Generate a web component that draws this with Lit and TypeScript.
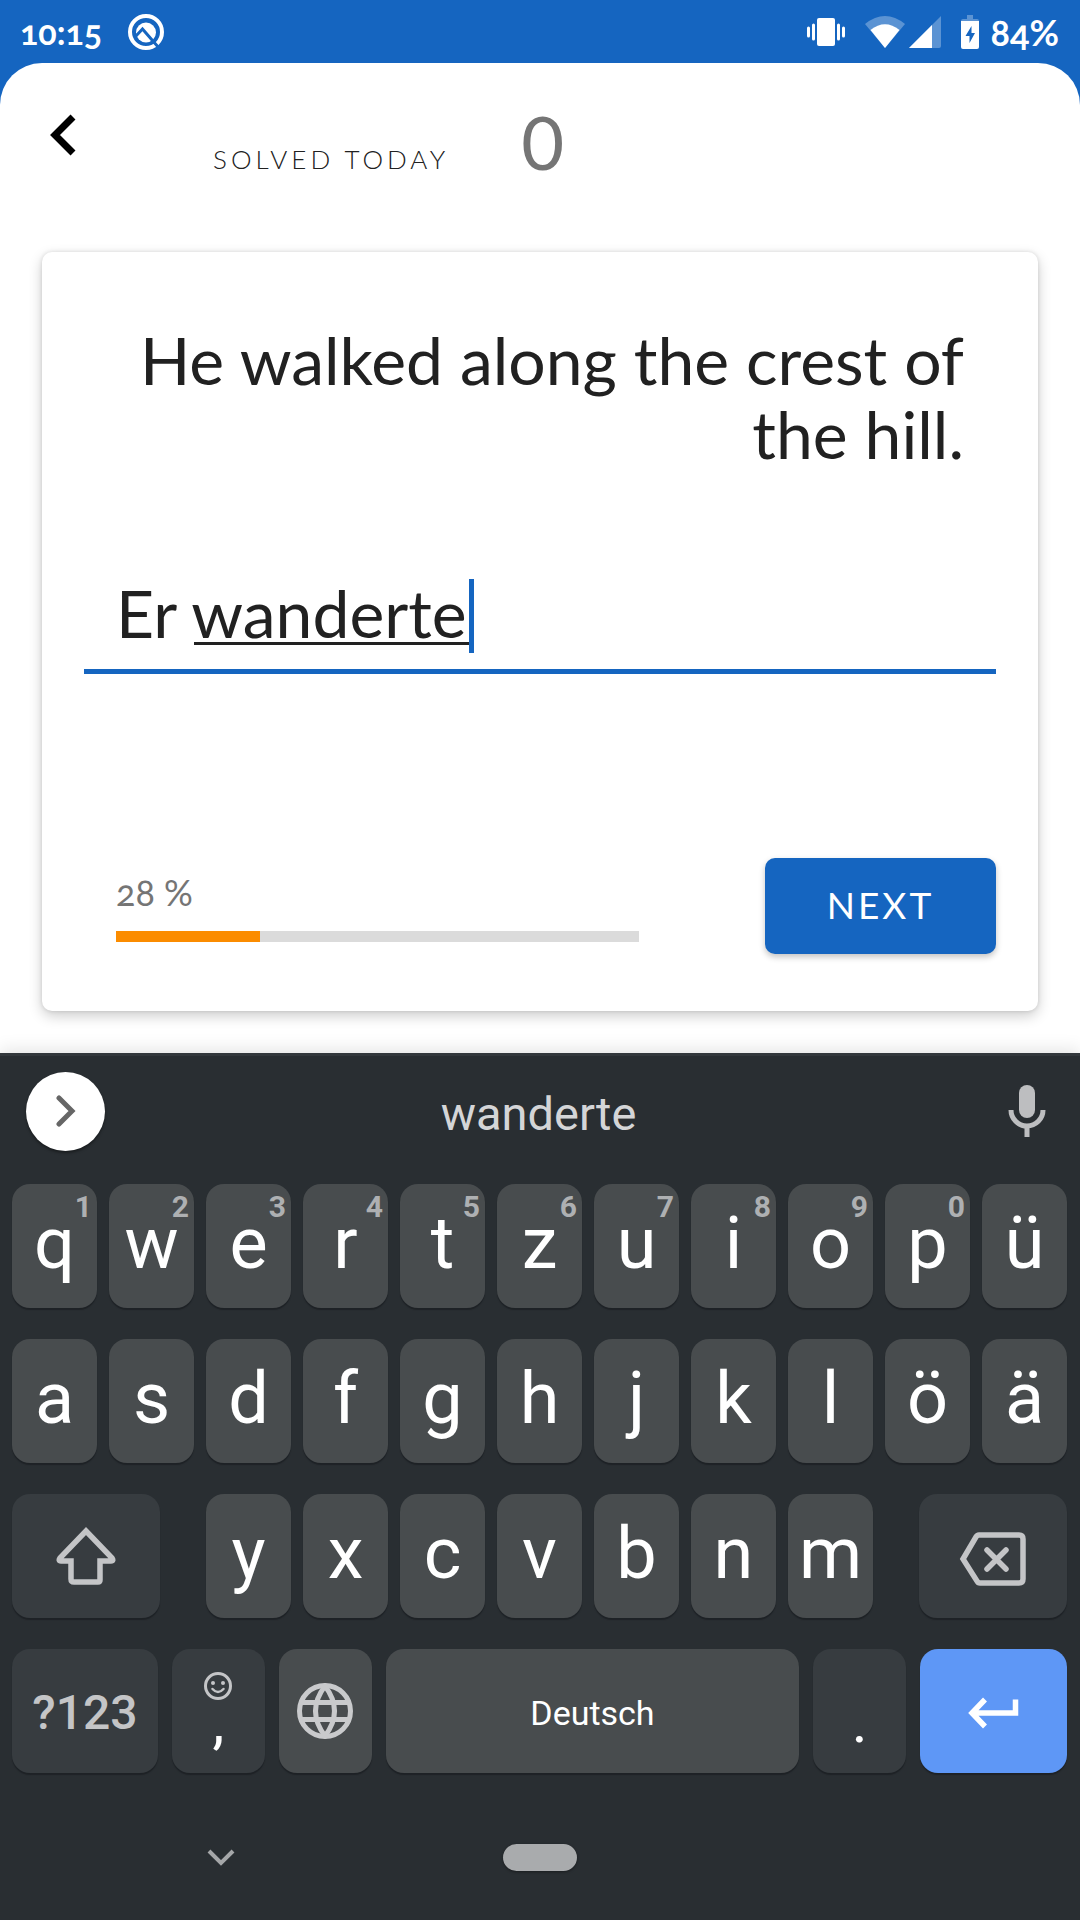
import { LitElement, html, css, svg } from "lit";
import { customElement, state } from "lit/decorators.js";
import { styleMap } from "lit/directives/style-map.js";
import { classMap } from "lit/directives/class-map.js";

const icon = (w: number, h: number, body: unknown) =>
  html`<svg width=${w} height=${h} viewBox="0 0 ${w} ${h}" fill="none" aria-hidden="true">${body}</svg>`;

const icons = {
  q: icon(38, 38, svg`
    <circle cx="19" cy="19" r="16" stroke="#fff" stroke-width="4"/>
    <circle cx="19" cy="19.500" r="10" fill="#fff"/>
    <path d="M8 24 15.500 16 32 35" stroke="#1565c0" stroke-width="3"/>`),
  vibrate: icon(38, 28, svg`
    <rect x="10" y="0" width="18" height="28" rx="2" fill="#fff"/>
    <path d="M6.500 7v14M1.500 10v8M31.500 7v14M36.500 10v8" stroke="#fff" stroke-width="3" stroke-linecap="round"/>`),
  wifi: icon(40, 32, svg`
    <path d="M0 8 Q20 -8 40 8 L20 32 Z" fill="#fff" fill-opacity=".3"/>
    <path d="M5.500 14 Q20 2.500 34.500 14 L20 32 Z" fill="#fff"/>`),
  signal: icon(32, 32, svg`
    <path d="M32 0V30a2 2 0 0 1-2 2H0Z" fill="#fff" fill-opacity=".3"/>
    <path d="M23 9V32H0Z" fill="#fff"/>`),
  battery: icon(18, 34, svg`
    <path d="M6 0h6v4h4a2 2 0 0 1 2 2H0a2 2 0 0 1 2-2h4Z" fill="#fff" fill-opacity=".3"/>
    <path d="M0 6H18V32a2 2 0 0 1-2 2H2a2 2 0 0 1-2-2Z" fill="#fff"/>
    <path d="M10.500 11 4.500 21H8.500V28L14 18H10.500Z" fill="#1565c0"/>`),
  back: icon(26, 42, svg`<path d="M23 3 5 21l18 18" stroke="#000" stroke-width="7"/>`),
  expand: icon(20, 32, svg`<path d="M3 3 16 16 3 29" stroke="#666" stroke-width="5" stroke-linecap="round"/>`),
  mic: icon(38, 52, svg`
    <rect x="11" y="0" width="16" height="33" rx="8" fill="#bdbec0"/>
    <path d="M3 25a16 16 0 0 0 32 0M19 41V52" stroke="#bdbec0" stroke-width="5"/>`),
  shift: icon(60, 58, svg`
    <path d="M30 4 56 31Q58 34 55 34H44V53Q44 55 42 55H18Q15 55 15 52V34H5Q2 34 4 31Z" stroke="#c4c5c7" stroke-width="5.500"/>`),
  del: icon(68, 60, svg`<g transform="translate(0 6)">
    <path d="M20 3H60Q64 3 64 7V47Q64 51 60 51H21Q19 51 18 49L4 27 17 5Q18 3 20 3Z" stroke="#c4c5c7" stroke-width="5.500"/>
    <path d="M28 18 47 37M47 18 28 37" stroke="#c4c5c7" stroke-width="5.500" stroke-linecap="round"/></g>`),
  smile: icon(30, 30, svg`
    <circle cx="15" cy="15" r="12.500" stroke="#c4c5c7" stroke-width="3"/>
    <circle cx="10" cy="12" r="2" fill="#c4c5c7"/><circle cx="20" cy="12" r="2" fill="#c4c5c7"/>
    <path d="M9.500 18q5.500 6 11 0" stroke="#c4c5c7" stroke-width="2.500" stroke-linecap="round"/>`),
  globe: icon(56, 56, svg`
    <g stroke="#c9cacc" stroke-width="5"><circle cx="28" cy="28" r="25.500"/>
    <path d="M5 19.500H51M5 36.500H51"/><path d="M28 3Q9 28 28 53Q47 28 28 3Z"/></g>`),
  enter: icon(52, 32, svg`<path d="M17 2.500 4 16 17 29.500M4 16H47.500V2.500" stroke="#fff" stroke-width="5.500"/>`),
  hide: icon(28, 18, svg`<path d="M2 2 14 14 26 2" stroke="#a5a7a9" stroke-width="4"/>`),
};

interface Key {
  label: string;
  hint?: string;
  grow?: number;
  tone?: string;
  face?: unknown;
}

const letters = (text: string, hints = ""): Key[] =>
  [...text].map((label, i) => ({ label, hint: hints[i] }));

const gap: Key = { label: "", grow: 22 };

const rows: Key[][] = [
  letters("qwertzuiopü", "1234567890"),
  letters("asdfghjklöä"),
  [
    { label: "Shift", grow: 148, tone: "dim icon", face: icons.shift },
    gap,
    ...letters("yxcvbnm"),
    gap,
    { label: "Backspace", grow: 148, tone: "dim icon", face: icons.del },
  ],
  [
    { label: "?123", grow: 146, tone: "dim symbols" },
    { label: "Comma", grow: 93, tone: "dim stacked", face: html`${icons.smile}<span>,</span>` },
    { label: "Language", grow: 93, tone: "icon", face: icons.globe },
    { label: "Deutsch", grow: 414, tone: "space" },
    { label: "Period", grow: 93, tone: "dim stacked", face: html`<span>.</span>` },
    { label: "Enter", grow: 147, tone: "enter", face: icons.enter },
  ],
];

@customElement("soft-keyboard")
class SoftKeyboard extends LitElement {
  static styles = css`
    :host { display: flex; flex-direction: column; flex: 1; background: #292e32; border-top: 3px solid #33383c; font-family: Roboto, sans-serif; box-shadow: 0 -4px 16px rgba(0, 0, 0, 0.1); }
    button { border: 0; padding: 0; margin: 0; font: inherit; color: inherit; background: none; }
    svg { display: block; }
    .suggestions { display: grid; grid-template-columns: 80px 1fr 80px; align-items: center; height: 128px; box-sizing: border-box; padding: 0 29px 18px 26px; }
    .expand { display: grid; place-items: center; width: 79px; height: 79px; border-radius: 50%; background: #fff; box-shadow: 0 2px 3px rgba(0, 0, 0, 0.4); }
    .word { font-size: 47px; line-height: 60px; color: #d4d5d7; padding-top: 5px; }
    .mic { justify-self: end; padding-right: 5px; }
    .keys { display: flex; flex-direction: column; gap: 31px; padding: 0 13px 0 12px; }
    .row { display: flex; gap: 12px; height: 124px; }
    .row:last-child { gap: 14px; }
    .key { position: relative; flex: 85 1 0; min-width: 0; display: flex; align-items: center; justify-content: center; border-radius: 18px; background: #484c4e; color: #fff; font-size: 72px; line-height: 84px; padding-bottom: 4px; box-shadow: 0 2px 1px #1e2226; }
    .spacer { flex: 1 1 0; min-width: 0; }
    .hint { position: absolute; top: 5px; right: 5px; font-size: 30px; line-height: 36px; font-weight: 700; color: #aeb0b2; }
    .dim { background: #373c40; }
    .icon { padding-bottom: 0; }
    .symbols { font-size: 48px; font-weight: 500; color: #c4c5c7; }
    .space { font-size: 34px; }
    .enter { background: #5e97f6; }
    .symbols, .space, .enter { padding: 3px 0 0; }
    .stacked { flex-direction: column; justify-content: flex-end; padding-bottom: 16px; }
    .stacked span { font-size: 60px; line-height: 70px; }
    .stacked svg { margin-bottom: -14px; }
    .nav { display: grid; grid-template-columns: 1fr auto 1fr; align-items: center; flex: 1; padding-top: 22px; }
    .hide { justify-self: center; margin-right: 62px; }
    .home { width: 74px; height: 27px; border-radius: 14px; background: #a9abad; box-shadow: 0 1px 3px rgba(0, 0, 0, 0.4); }
  `;

  private renderKey(key: Key) {
    const style = key.grow ? styleMap({ flexGrow: String(key.grow) }) : styleMap({});
    if (!key.label) return html`<span class="spacer" style=${style}></span>`;
    const tones = Object.fromEntries((key.tone ?? "").split(" ").filter(Boolean).map((t) => [t, true]));
    return html`<button class=${classMap({ key: true, ...tones })} style=${style} aria-label=${key.label}>
      ${key.face ?? key.label}${key.hint ? html`<span class="hint">${key.hint}</span>` : ""}
    </button>`;
  }

  render() {
    return html`
      <div class="suggestions">
        <button class="expand" aria-label="More tools">${icons.expand}</button>
        <button class="word">wanderte</button>
        <button class="mic" aria-label="Voice input">${icons.mic}</button>
      </div>
      <div class="keys">${rows.map((row) => html`<div class="row">${row.map((k) => this.renderKey(k))}</div>`)}</div>
      <div class="nav">
        <button class="hide" aria-label="Hide keyboard">${icons.hide}</button>
        <button class="home" aria-label="Home"></button>
      </div>
    `;
  }
}

@customElement("app-root")
class AppRoot extends LitElement {
  @state() private committed = "Er ";
  @state() private composing = "wanderte";
  @state() private solved = 0;
  @state() private progress = 27.5;

  static styles = css`
    :host { display: flex; flex-direction: column; min-height: 100vh; background: #1565c0; font-family: Lato, sans-serif; color: #212121; }
    svg { display: block; }
    button { border: 0; padding: 0; margin: 0; font: inherit; color: inherit; background: none; }
    .status { display: flex; align-items: center; height: 63px; box-sizing: border-box; padding: 0 21px 0 20px; color: #fff; font-size: 34px; line-height: 40px; font-weight: 700; font-feature-settings: "onum"; }
    .clock { margin-right: 25px; }
    .system { display: flex; align-items: center; margin-left: auto; }
    .vibrate { margin-right: 20px; }
    .signal { margin: 0 20px 0 4px; }
    .battery { margin-right: 12px; }
    .charge { font-size: 36px; }
    .page { background: #fff; border-radius: 42px 42px 0 0; padding: 0 42px 42px; }
    .top { display: flex; align-items: flex-end; height: 189px; box-sizing: border-box; padding: 0 8px 66px; }
    .top > * { flex: none; }
    .back { align-self: flex-start; margin-top: 51px; }
    .solved-label { font-size: 26px; line-height: 32px; font-weight: 300; letter-spacing: 4px; margin-left: 137px; padding-bottom: 11px; }
    .solved { font-size: 74px; line-height: 88px; color: #757575; margin-left: 72px; }
    .card { display: flex; flex-direction: column; padding: 71px 42px 57px; border-radius: 10px; background: #fff; box-shadow: 0 5px 14px rgba(0, 0, 0, 0.2), 0 0 4px rgba(0, 0, 0, 0.12); }
    .prompt { margin: 0 32px; font-size: 66px; line-height: 74px; font-weight: 400; text-align: right; }
    .field { position: relative; margin-top: 108px; height: 90px; border-bottom: 5px solid #1565c0; }
    .answer { display: block; width: 100%; box-sizing: border-box; border: 0; outline: 0; background: none; padding: 0 32px; height: 68px; font: inherit; font-size: 66px; line-height: 68px; color: inherit; }
    .mark { position: absolute; top: 63px; height: 3px; background: #212121; }
    .caret { position: absolute; top: 0; width: 5px; height: 74px; background: #1565c0; }
    .bottom { display: flex; align-items: center; justify-content: space-between; margin-top: 184px; padding-left: 32px; }
    .meter { display: flex; flex-direction: column; gap: 17px; flex: 0 1 523px; }
    .percent { font-size: 36px; line-height: 44px; color: #757575; font-feature-settings: "onum"; }
    .bar { appearance: none; display: block; width: 100%; height: 11px; border: 0; background: #dbdbdb; }
    .bar::-webkit-progress-bar { background: #dbdbdb; }
    .bar::-webkit-progress-value { background: #fb8c00; }
    .next { width: 231px; height: 96px; padding-bottom: 3px; border-radius: 10px; background: #1565c0; color: #fff; font-size: 37px; letter-spacing: 3px; box-shadow: 0 3px 6px rgba(0, 0, 0, 0.24); }
  `;

  private measure(text: string) {
    const ctx = document.createElement("canvas").getContext("2d")!;
    ctx.font = "66px Lato, sans-serif";
    return Math.round(ctx.measureText(text).width);
  }

  render() {
    const start = 32 + this.measure(this.committed);
    const width = this.measure(this.composing);
    return html`
      <header class="status">
        <span class="clock">10:15</span>${icons.q}
        <div class="system">
          <span class="vibrate">${icons.vibrate}</span>${icons.wifi}
          <span class="signal">${icons.signal}</span>
          <span class="battery">${icons.battery}</span><span class="charge">84%</span>
        </div>
      </header>
      <main class="page">
        <div class="top">
          <button class="back" aria-label="Back">${icons.back}</button>
          <span class="solved-label">SOLVED TODAY</span>
          <span class="solved">${this.solved}</span>
        </div>
        <section class="card">
          <label class="prompt" for="answer">He walked along the crest of the hill.</label>
          <div class="field">
            <input class="answer" id="answer" type="text" spellcheck="false" .value=${this.committed + this.composing} />
            <span class="mark" style=${styleMap({ left: `${start}px`, width: `${width}px` })}></span>
            <span class="caret" style=${styleMap({ left: `${start + width}px` })}></span>
          </div>
          <div class="bottom">
            <div class="meter">
              <label class="percent" for="progress">${Math.round(this.progress)} %</label>
              <progress class="bar" id="progress" max="100" .value=${this.progress}></progress>
            </div>
            <button class="next">NEXT</button>
          </div>
        </section>
      </main>
      <soft-keyboard></soft-keyboard>
    `;
  }
}
